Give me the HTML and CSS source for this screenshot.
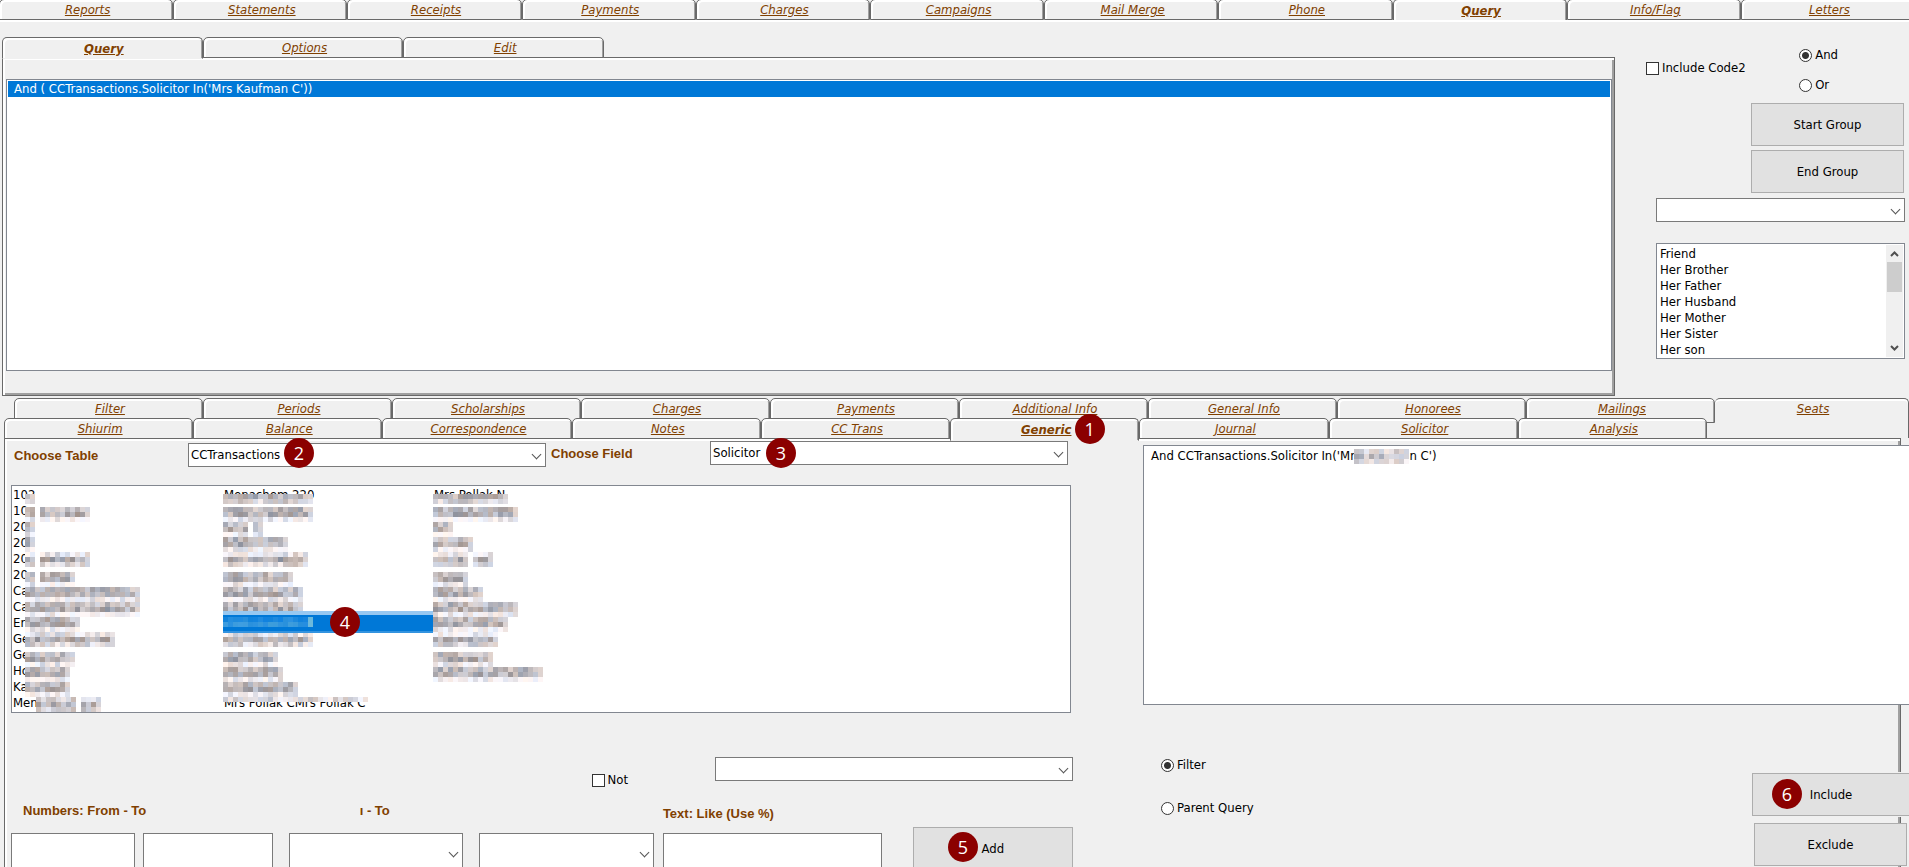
FILE: index.html
```html
<!DOCTYPE html>
<html lang="en">
<head>
<meta charset="utf-8">
<title>Query</title>
<link rel="stylesheet" href="styles.css">
</head>
<body>
<nav class="tabs tabs-main">
  <a class="tab" href="#">Reports</a><a class="tab" href="#">Statements</a><a class="tab" href="#">Receipts</a><a class="tab" href="#">Payments</a><a class="tab" href="#">Charges</a><a class="tab" href="#">Campaigns</a><a class="tab" href="#">Mail Merge</a><a class="tab" href="#">Phone</a><a class="tab active" href="#">Query</a><a class="tab" href="#">Info/Flag</a><a class="tab" href="#">Letters</a>
</nav>

<main>
  <section class="upper">
    <div class="query-area">
      <nav class="tabs tabs-query">
        <a class="tab active" href="#">Query</a><a class="tab" href="#">Options</a><a class="tab" href="#">Edit</a>
      </nav>
      <div class="query-panel">
        <select class="listbox query-list" size="2" aria-label="Query lines">
          <option class="picked">And ( CCTransactions.Solicitor In('Mrs Kaufman C'))</option>
        </select>
      </div>
    </div>

    <aside class="side">
      <div class="side-options">
        <label class="check"><input type="checkbox">Include Code2</label>
        <div class="joins">
          <label class="check"><input type="radio" name="join" checked>And</label>
          <label class="check"><input type="radio" name="join">Or</label>
        </div>
      </div>
      <div class="side-buttons">
        <button class="btn" type="button">Start Group</button>
        <button class="btn" type="button">End Group</button>
      </div>
      <div class="combo"><select aria-label="Code"><option></option></select></div>
      <div class="relations">
        <select class="listbox relation-list" size="7" aria-label="Relation">
          <option>Friend</option><option>Her Brother</option><option>Her Father</option><option>Her Husband</option><option>Her Mother</option><option>Her Sister</option><option>Her son</option>
        </select>
        <div class="scrollbar">
          <svg width="9" height="6" viewBox="0 0 9 6"><path d="M1 5 4.500 1.500 8 5"/></svg>
          <div class="thumb"></div>
          <svg width="9" height="6" viewBox="0 0 9 6"><path d="M1 1 4.500 4.500 8 1"/></svg>
        </div>
      </div>
    </aside>
  </section>

  <section class="lower">
    <nav class="tabs tabs-back">
      <a class="tab" href="#">Filter</a><a class="tab" href="#">Periods</a><a class="tab" href="#">Scholarships</a><a class="tab" href="#">Charges</a><a class="tab" href="#">Payments</a><a class="tab" href="#">Additional Info</a><a class="tab" href="#">General Info</a><a class="tab" href="#">Honorees</a><a class="tab" href="#">Mailings</a><a class="tab seats" href="#">Seats</a>
    </nav>
    <nav class="tabs tabs-front">
      <a class="tab" href="#">Shiurim</a><a class="tab" href="#">Balance</a><a class="tab" href="#">Correspondence</a><a class="tab" href="#">Notes</a><a class="tab" href="#">CC Trans</a><a class="tab active" href="#">Generic<span class="badge badge-tab">1</span></a><a class="tab" href="#">Journal</a><a class="tab" href="#">Solicitor</a><a class="tab" href="#">Analysis</a>
    </nav>

    <div class="generic-panel">
      <div class="left">
        <div class="choosers">
          <label class="caption" for="table">Choose Table</label>
          <div class="combo low"><select id="table"><option>CCTransactions</option></select><span class="badge badge-table">2</span></div>
          <label class="caption second" for="field">Choose Field</label>
          <div class="combo"><select id="field"><option>Solicitor</option></select><span class="badge badge-field">3</span></div>
        </div>

        <div class="values" role="listbox" aria-label="Values"></div>

        <div class="not-row">
          <label class="check"><input type="checkbox">Not</label>
          <div class="combo"><select aria-label="Value"><option></option></select></div>
        </div>

        <div class="ranges">
          <fieldset class="group numbers">
            <legend class="caption">Numbers: From - To</legend>
            <input type="text" aria-label="From number"><input class="wide" type="text" aria-label="To number">
          </fieldset>
          <fieldset class="group dates">
            <legend class="caption">ı - To</legend>
            <div class="combo tall"><select aria-label="From"><option></option></select></div>
            <div class="combo tall"><select aria-label="To"><option></option></select></div>
          </fieldset>
          <fieldset class="group text">
            <legend class="caption">Text: Like (Use %)</legend>
            <input type="text" aria-label="Text like">
          </fieldset>
          <button class="btn add" type="button"><span class="badge badge-add">5</span>Add</button>
        </div>
      </div>

      <div class="right">
        <div class="output">
          <textarea aria-label="Condition">And CCTransactions.Solicitor In('Mrs Kaufman C')</textarea>
          <div class="output-mask"><svg class="mosaic" data-cells="11" data-seed="91"></svg></div>
        </div>
        <div class="actions">
          <div class="targets">
            <label class="check"><input type="radio" name="target" checked>Filter</label>
            <label class="check"><input type="radio" name="target">Parent Query</label>
          </div>
          <div class="action-buttons">
            <button class="btn include" type="button"><span class="badge badge-include">6</span>Include</button>
            <button class="btn exclude" type="button">Exclude</button>
          </div>
        </div>
      </div>
    </div>
  </section>
</main>
<script src="app.js"></script>
</body>
</html>
```
FILE: styles.css
```css
* { box-sizing: border-box; }

body {
  margin: 0;
  height: 100vh;
  overflow: hidden;
  background: #f0f0f0;
  color: #000;
  font: 13px/16px "DejaVu Sans Condensed", "DejaVu Sans", sans-serif;
}

button, input, select, textarea { font: inherit; color: inherit; border-radius: 0; margin: 0; }

/* Tabs */
.tabs { display: flex; position: relative; }
.tab {
  flex: 1 1 0;
  min-width: 0;
  height: 20px;
  padding-left: 3px;
  position: relative;
  text-align: center;
  font-style: italic;
  line-height: 20px;
  color: #804000;
  background: #f0f0f0;
  border: 1px solid #696969;
  border-radius: 5px 5px 0 0;
  box-shadow: inset 2px 2px #fff, inset -1px 0 #a0a0a0;
}
.tab.active {
  font-weight: bold;
  line-height: 22px;
  border-bottom-color: #f0f0f0;
  z-index: 1;
}
.tabs-main { height: 22px; margin: 0 -6px 0 -1px; overflow: hidden; border-bottom: 2px solid #fff; }
.tabs-main .tab { margin-top: -1px; height: 21px; line-height: 20px; }
.tabs-main .active { height: 23px; line-height: 22px; }

/* Upper half */
.upper { display: grid; grid-template-columns: minmax(0, 1fr) 294px; }
.query-area { padding: 15px 0 0 2px; }
.tabs-query { width: 602px; height: 20px; }
.tabs-query .tab { height: 21px; }
.tabs-query .active { height: 22px; }
.query-panel {
  height: 339px;
  padding: 21px 2px 0 3px;
  border: 1px solid #696969;
  box-shadow: inset 2px 2px #fff, inset -2px -2px #a0a0a0;
}
.listbox {
  display: block;
  width: 100%;
  padding: 1px;
  background: #fff;
  border: 1px solid #828790;
  overflow: hidden;
  outline: 0;
}
.query-list { height: 292px; }
.listbox option { min-height: 16px; height: 16px; line-height: 16px; padding: 0 2px; }
.listbox .picked { background: #0078d7; color: #fff; padding: 0 6px; }

.side { padding: 25px 4px 0 31px; }
.side-options { display: flex; justify-content: space-between; padding-right: 67px; }
.side-options > .check { margin-top: 13px; }
.check { display: flex; align-items: center; gap: 3px; height: 16px; }
.joins { display: grid; gap: 14px; }
.check input {
  appearance: none;
  width: 13px;
  height: 13px;
  background: #fff;
  border: 1px solid #333;
}
.check input[type="radio"] { border-radius: 50%; }
.check input[type="radio"]:checked { background: radial-gradient(circle, #333 3px, #fff 4px); }
.side-buttons { display: grid; gap: 4px; width: 154px; margin: 10px 0 5px auto; padding-right: 1px; }
.btn {
  height: 43px;
  padding: 0;
  position: relative;
  background: #e1e1e1;
  border: 1px solid #adadad;
}
.side .combo { margin-left: 10px; }

.combo { position: relative; height: 24px; }
.combo select {
  appearance: none;
  display: block;
  width: 100%;
  height: 100%;
  padding: 0 20px 0 2px;
  background: #fff;
  border: 1px solid #7a7a7a;
  outline: 0;
}
.combo::after {
  content: "";
  position: absolute;
  right: 6px;
  top: 50%;
  width: 6px;
  height: 6px;
  margin-top: -4px;
  border: solid #555;
  border-width: 0 1px 1px 0;
  transform: rotate(45deg);
  pointer-events: none;
}

.relations {
  display: flex;
  height: 116px;
  margin: 21px 0 0 10px;
  border: 1px solid #828790;
  background: #fff;
}
.relation-list { flex: 1; border: 0; height: 114px; padding-top: 2px; }
.scrollbar {
  width: 17px;
  margin: 1px;
  background: #f0f0f0;
  display: flex;
  flex-direction: column;
  align-items: center;
  padding: 6px 0;
}
.scrollbar svg { fill: none; stroke: #505050; stroke-width: 2; flex: none; }
.thumb { width: 15px; height: 30px; margin: 5px 0 auto; background: #cdcdcd; }

/* Lower half */
.lower { margin-top: 2px; }
.tabs-back { padding-left: 14px; height: 20px; }
.tabs-back .tab { height: 25px; }
.tabs-back .seats { flex: 0 0 194px; height: 40px; border-bottom: 0; border-left: 0; box-shadow: inset 0 2px #fff; }
.tabs-front { padding-left: 4px; height: 20px; margin-right: 202px; z-index: 1; }
.tabs-front .tab { height: 21px; }
.tabs-front .active { height: 23px; }
.generic-panel {
  display: grid;
  grid-template-columns: minmax(0, 1068fr) minmax(0, 757fr);
  column-gap: 70px;
  margin: 0 8px 0 4px;
  border: 1px solid #696969;
  border-width: 1px 1px 0;
  box-shadow: inset 2px 2px #fff, inset -2px 0 #a0a0a0, 8px 0 #f0f0f0, 9px 0 #a0a0a0;
  height: 460px;
}
.caption { font: bold 13px/16px "Liberation Sans", Arial, sans-serif; color: #804000; padding: 0; }
.left { padding-left: 6px; }
.choosers {
  display: grid;
  grid-template-columns: 174fr 358fr 164fr 358fr;
  height: 26px;
  margin: 2px 5px 0 3px;
}
.choosers .caption { margin-top: 7px; }
.choosers .second { padding-left: 5px; margin-top: 5px; }
.choosers .low { margin-top: 2px; }

.values {
  display: grid;
  grid-template-columns: 211px 210px 1fr;
  margin: 18px 2px 0 0;
  padding: 1px 0;
  height: 228px;
  background: #fff;
  border: 1px solid #828790;
}
.value { position: relative; height: 16px; padding-left: 1px; white-space: nowrap; }
.value.selected { background: #0078d7; box-shadow: 0 -4px #97c8f1, 0 2px #3393df; z-index: 1; }
.mosaic { position: absolute; display: block; }

.not-row { display: flex; justify-content: flex-end; margin-top: 44px; }
.not-row .check { margin: 15px 87px 0 0; }
.not-row .combo { flex: 0 1 358px; }

.ranges { display: flex; margin-top: 15px; }
.group { display: flex; border: 0; margin: 0; padding: 0; min-width: 0; }
.group .caption { height: 30px; }
.group input { min-width: 0; width: 0; flex: 124; height: 40px; background: #fff; border: 1px solid #7a7a7a; padding: 0 3px; }
.group .wide { flex: 131; }
.group .tall { flex: 1; height: 40px; }
.numbers { flex: 263 1 0; gap: 8px; }
.numbers .caption { padding-left: 12px; }
.dates { flex: 367 1 0; gap: 16px; margin-left: 16px; }
.dates .caption { padding-left: 71px; }
.text { flex: 220 1 0; margin-left: 9px; }
.text .caption { padding-top: 3px; }
.add { flex: 159 1 0; margin: 24px 0 0 31px; }

.right { margin-right: -9px; min-width: 0; }
.output { position: relative; margin-top: 6px; }
textarea {
  display: block;
  width: 100%;
  height: 260px;
  padding: 2px 7px;
  resize: none;
  overflow: hidden;
  background: #fff;
  border: 1px solid #828790;
  border-right: 0;
  outline: 0;
}
.output-mask { position: absolute; left: 211px; top: 4px; }
.actions { display: flex; justify-content: space-between; }
.targets { display: grid; gap: 27px; align-content: start; padding: 52px 0 0 18px; }
.action-buttons { display: grid; gap: 7px; padding-top: 68px; width: 157px; }
.include { border-right: 0; outline: 1px solid #f0f0f0; }
.exclude { margin: 0 2px; }

/* Step markers */
.badge {
  position: absolute;
  width: 30px;
  height: 30px;
  border-radius: 50%;
  background: #8b0000;
  color: #fff;
  font: 18px/30px "Open Sans", "Noto Sans", sans-serif;
  text-align: center;
  z-index: 3;
}
.badge-tab { left: calc(50% + 30px); top: -5px; }
.badge-table { left: 96px; top: -5px; }
.badge-field { left: 56px; top: -3px; }
.badge-value { left: 107px; top: -8px; }
.badge-add { left: 34px; top: 4px; }
.badge-include { left: 19px; top: 5px; }
```
FILE: app.js
```js
// Value columns: [visible text, hidden width in 5px cells, cell skipped as a gap]
const columns = [
  [["102", 2], ["10", 13, 2], ["20", 2], ["20", 2], ["20", 13, 2], ["20", 10, 2], ["Ca", 23], ["Ca", 23],
   ["En", 11], ["Ge", 18], ["Ge", 10], ["Ho", 9], ["Ka", 9], ["Men", 13, 8]],
  [["Menachem 220", 18], ["", 18], ["", 8, 5], ["", 13], ["", 17], ["", 14], ["", 16], ["", 16],
   ["", 18], ["", 18], ["", 11], ["", 12], ["", 15], ["Mrs Pollak CMrs Pollak C", 29]],
  [["Mrs Pollak N", 15], ["", 17], ["", 4], ["", 8], ["", 12, 7], ["", 7], ["", 10], ["", 17],
   ["", 15], ["", 13], ["", 12], ["", 22]]
];
const bandTop = [7, 4, 3, 2, 6, 5, 4, 3, 2, 6, 5, 4, 3, 2];
const NS = "http://www.w3.org/2000/svg";
const list = document.querySelector(".values");

function random(seed) {
  let s = seed * 7919 + 17;
  return () => (s = (s * 16807) % 2147483647) / 2147483647;
}

function fillMosaic(svg, cells, seed, gap, blue, rows) {
  const next = random(seed);
  for (let i = 0; i < 5; i++) next();
  svg.setAttribute("width", cells * 5);
  svg.setAttribute("height", rows.length * 5);
  for (let y = 0; y < rows.length; y++) {
    for (let x = 0; x < cells; x++) {
      if (gap && x === gap) continue;
      let shade = rows[y] + next() * 60 - 30;
      if (x === cells - 1) shade = Math.max(shade, 215);
      shade = Math.min(shade, 250);
      const tint = (next() - 0.5) * 22;
      const r = document.createElementNS(NS, "rect");
      r.setAttribute("x", x * 5);
      r.setAttribute("y", y * 5);
      r.setAttribute("width", 5);
      r.setAttribute("height", 5);
      const c = v => Math.round(Math.min(255, v));
      r.setAttribute("fill", blue
        ? `rgb(${c(shade * 0.5)},${c(120 + shade * 0.3)},${c(222 + tint / 4)})`
        : `rgb(${c(shade + tint)},${c(shade - 4)},${c(shade - tint)})`);
      svg.append(r);
    }
  }
}

for (let row = 0; row < 14; row++) {
  columns.forEach((column, col) => {
    const item = document.createElement("div");
    item.className = "value";
    const entry = column[row];
    if (entry) {
      const [text, cells, gap] = entry;
      const selected = row === 8 && col === 1;
      item.setAttribute("role", "option");
      item.textContent = text;
      const svg = document.createElementNS(NS, "svg");
      svg.setAttribute("class", "mosaic");
      const late = row === 4 || row === 9;
      const rows = selected ? [60, 100] : row === 0 ? [185, 215] : late ? [232, 175, 215] : row === 13 && col ? [225] : row === 13 ? [215, 185, 215] : [190, 180, 243];
      svg.style.left = (col ? 0 : row === 13 ? 24 : 13) + "px";
      svg.style.top = bandTop[row] - (late ? 5 : 0) + "px";
      fillMosaic(svg, cells, row * 3 + col + 1, gap, selected, rows);
      item.append(svg);
      if (selected) {
        item.classList.add("selected");
        item.setAttribute("aria-selected", "true");
        const badge = document.createElement("span");
        badge.className = "badge badge-value";
        badge.textContent = "4";
        item.append(badge);
      }
    }
    list.append(item);
  });
}

document.querySelectorAll(".mosaic[data-cells]").forEach(svg =>
  fillMosaic(svg, +svg.dataset.cells, +svg.dataset.seed, 0, false, [225, 195, 220]));
```
